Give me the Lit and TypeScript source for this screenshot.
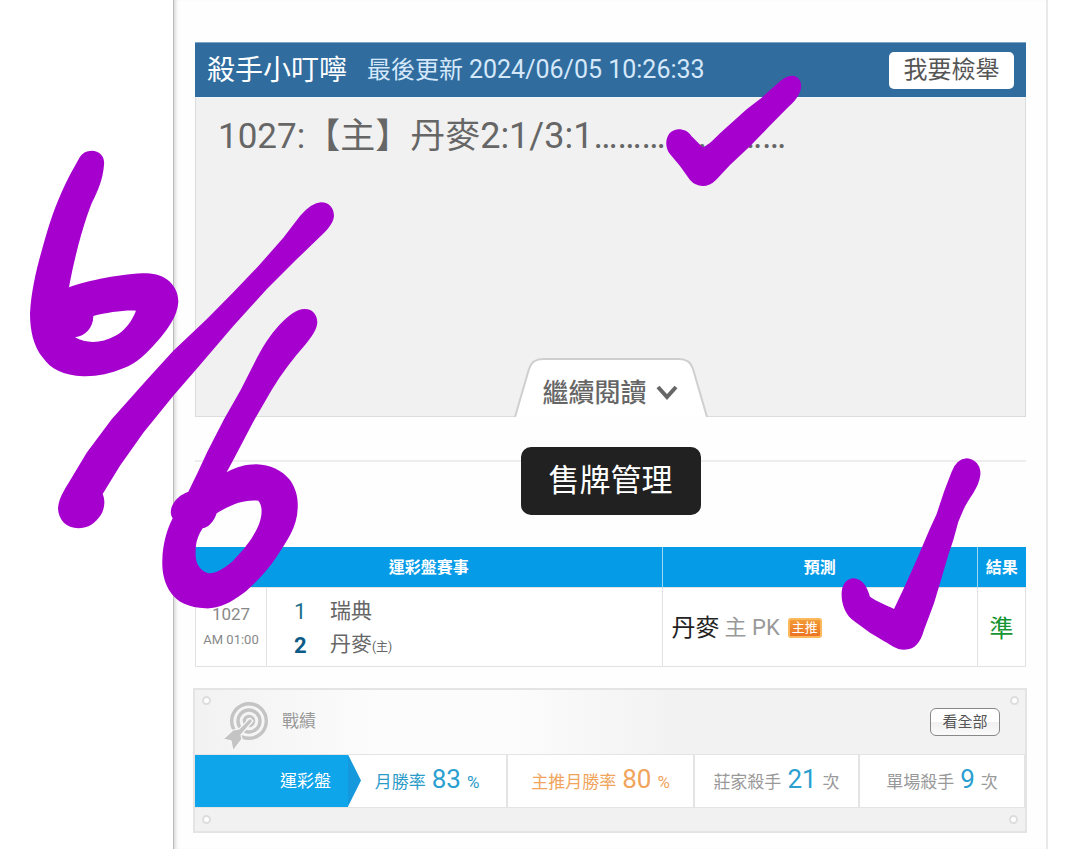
import { LitElement, html, css, svg } from "lit";
import { customElement } from "lit/decorators.js";

const stats = [
  { label: "月勝率", value: "83", unit: "%", tone: "blue" },
  { label: "主推月勝率", value: "80", unit: "%", tone: "orange" },
  { label: "莊家殺手", value: "21", unit: "次", tone: "plain" },
  { label: "單場殺手", value: "9", unit: "次", tone: "plain" },
];

const target = svg`
  <g fill="none" stroke="#c4c4c4" stroke-width="3.4">
    <circle cx="27" cy="19" r="17.3"></circle>
    <circle cx="27" cy="19" r="11"></circle>
    <circle cx="27" cy="19" r="4.6"></circle>
  </g>
  <path d="M28 16l3 3-12 14 1 4-9 12-2-10-8-2 10-9 6-1z" fill="#c4c4c4" stroke="#f8f8f8" stroke-width="1.2"></path>`;

@customElement("ink-marks")
class InkMarks extends LitElement {
  static styles = css`
    :host { position: absolute; inset: 0; pointer-events: none; }
    svg { display: block; width: 1076px; height: 849px; fill: #a600cf; fill-rule: evenodd; }
  `;
  render() {
    return html`<svg viewBox="0 0 1076 849" aria-hidden="true">
      <g transform="translate(0 130) scale(.33333)">
        <path d="M275 62C300 62 315 80 312 105C308 150 295 180 275 220L262 255C240 320 220 400 207 472C260 452 370 430 440 430C495 431 535 465 535 515C533 560 500 600 480 625C440 672 410 700 370 715C330 732 290 740 250 739C190 737 150 715 130 685C100 650 90 600 90 550C95 460 120 380 140 310C160 240 190 170 215 125L240 80Q252 62 275 62ZM280 558C320 548 370 540 408 542C395 575 375 602 345 618C305 640 260 642 225 622C255 618 280 595 280 558Z"></path>
        <path d="M963 217C988 217 1002 235 1002 258C1000 280 982 300 960 320L890 388L800 478L700 588L600 705L520 797L430 908L360 1007L308 1092C318 1115 313 1145 295 1165C280 1185 260 1195 235 1195C200 1195 175 1170 174 1135C176 1100 200 1070 220 1035L260 968L335 868L440 750L520 662L620 568L700 487L780 403L850 323L900 258Q935 218 963 217Z"></path>
        <path d="M915 537C938 537 952 555 952 578C950 600 935 620 915 645C880 685 845 730 815 780L760 875L705 980L680 1027C710 1010 740 1003 770 1003C810 1005 845 1020 870 1050C890 1078 895 1110 893 1135C892 1190 860 1235 830 1280C800 1325 760 1365 730 1390C690 1420 655 1437 615 1435C570 1432 530 1420 507 1380C490 1350 486 1320 487 1290C488 1245 500 1200 518 1165C508 1150 512 1130 525 1113C540 1095 550 1092 565 1085L592 1030L622 965L672 868L722 780L765 695C785 655 810 615 838 585Q885 535 915 537ZM650 1150C690 1125 730 1108 775 1112C790 1130 785 1160 778 1180C765 1215 735 1255 710 1280C690 1305 650 1332 625 1330C595 1320 585 1295 587 1265C587 1235 595 1215 608 1195C625 1193 642 1175 650 1150Z"></path>
      </g>
      <g transform="translate(580 30) scale(.33333)">
        <path d="M637 137C655 138 666 153 663 174C659 198 642 216 622 234L565 292L510 349L450 405L408 450Q390 468 368 468Q345 467 330 450L300 408L268 370C250 345 258 300 295 298C312 298 325 304 334 318L368 352C388 344 402 328 420 310L455 278L500 238L545 203L590 163Q615 137 637 137Z"></path>
      </g>
      <g transform="translate(640 440) scale(.33333)">
        <path d="M980 55C1008 57 1024 80 1021 105C1017 145 985 175 970 210L955 245L940 300L925 345L903 420L882 490L852 570C840 610 825 629 792 629C768 629 755 615 735 605L690 578L645 545C615 525 603 490 605 455C608 430 622 415 642 415C668 418 680 438 690 470C710 485 740 495 762 507L795 437L832 355L868 270L890 222L912 155L935 95Q950 57 980 55Z"></path>
      </g>
    </svg>`;
  }
}

@customElement("app-root")
class AppRoot extends LitElement {
  static styles = css`
    :host {
      display: block; position: relative; min-height: 100vh; overflow: hidden; box-sizing: border-box;
      padding: 0 28px 0 173px; background: #fff; color: #666;
      font-family: Roboto, "Noto Sans CJK TC", sans-serif;
    }
    * { box-sizing: border-box; }
    button { font-family: inherit; margin: 0; padding: 0; cursor: pointer; }
    .page {
      min-height: 100vh; padding: 42px 20px 16px 21px; background: #fefefe;
      border-left: 1px solid #bbb; border-right: 2px solid #e9e9e9;
      box-shadow: inset 4px 0 4px -3px #ccc;
    }
    .bar {
      display: flex; align-items: center; height: 55px; padding: 0 12px; background: #306c9e;
      border-top: 1px solid #7fa6c6; color: #fff;
    }
    .name { margin: 0; font-size: 28px; font-weight: 400; line-height: 40px; padding-top: 2px; }
    .time { margin-left: 20px; font-size: 24px; line-height: 40px; color: #d5e8fa; }
    .time span { font-size: 25px; }
    .report {
      margin-left: auto; width: 125px; height: 37px; border: 0; border-radius: 5px;
      background: #fff; color: #555; font-size: 24px; line-height: 36px;
    }
    .body {
      display: flex; flex-direction: column; justify-content: space-between; height: 320px;
      background: #f1f1f1; border: 1px solid #dcdcdc; border-top-color: #eef6fb;
    }
    .body p { margin: 0; padding: 12px 22px; font-size: 35px; line-height: 52px; color: #666; white-space: nowrap; }
    .body p span { font-size: 36px; }
    .more {
      display: grid; place-items: center; align-self: center; width: 194px; height: 59px; margin-bottom: -1px;
      border: 0; background: none; color: #666; font-size: 26px; font-weight: 500; line-height: 36px;
    }
    .more > * { grid-area: 1 / 1; }
    .more span { display: flex; align-items: center; gap: 8px; padding-top: 10px; }
    .manage {
      display: grid; grid-template-columns: 1fr 180px 1fr; margin: 30px 0 32px; height: 68px;
    }
    .manage::before, .manage::after { content: ""; margin-top: 13px; border-top: 2px solid #ededed; }
    .manage button { border: 0; border-radius: 10px; background: #212121; color: #fff; font-size: 31px; line-height: 44px; }
    table { width: 100%; table-layout: fixed; border-collapse: collapse; }
    th { height: 40px; padding: 3px 0 0; background: #059be7; color: #fff; font-size: 16px; line-height: 24px; border-left: 1px solid #9fd7f7; }
    th:first-child { border-left-color: #059be7; }
    td { height: 79px; padding: 0; border: 1px solid #e2e2e2; background: #fff; }
    .c-time { width: 71px; } .c-pick { width: 38%; } .c-res { width: 48px; }
    .when { text-align: center; color: #888; }
    .when div { font-size: 17px; line-height: 26px; }
    .when small { display: block; font-size: 13px; line-height: 26px; }
    .teams { padding-top: 5px; }
    .team { display: grid; grid-template-columns: 36px 1fr; padding-left: 27px; align-items: center; line-height: 33px; font-size: 21px; }
    .team b { font-size: 22px; color: #1c6f8c; font-weight: 400; }
    .team .home { font-weight: 700; color: #0e5b87; }
    .team small { font-size: 12px; }
    .pick { display: flex; align-items: center; padding: 2px 0 0 9px; color: #222; font-size: 24px; line-height: 36px; }
    .pick i { margin-left: 5px; font-size: 22px; font-style: normal; color: #999; }
    .badge {
      margin-left: 8px; width: 34px; height: 20px; border: 2px solid #fbb85c; border-radius: 3px;
      background: linear-gradient(#f39a35, #ec7424); color: #fff; font-size: 13px; line-height: 16px; text-align: center;
    }
    .ok { text-align: center; color: #169533; font-size: 24px; }
    .record {
      margin: 21px -1px 0 -2px; border: 2px solid #e4e4e4;
      background: linear-gradient(90deg, #f2f2f2 0, #fcfcfc 22%, #fcfcfc 38%, #f2f2f2 58%);
    }
    .top { display: grid; grid-template-columns: 12px 1fr auto; padding: 6px 6px 0 7px; height: 64px; }
    .title { display: flex; gap: 14px; padding: 6px 0 0 8px; font-size: 17px; line-height: 40px; color: #999; }
    .title h2 { margin: 0; font-size: 17px; font-weight: 400; line-height: 38px; }
    .side { display: flex; gap: 10px; }
    .all {
      width: 70px; height: 28px; margin-top: 12px; border: 1px solid #888; border-radius: 6px; color: #555;
      background: linear-gradient(#fff 50%, #f0f0f0 50%, #fafafa); font-size: 15px; line-height: 24px;
    }
    .pin { display: block; width: 9px; height: 9px; border: 2px solid #ddd; border-radius: 50%; background: #fff; }
    .row { display: grid; grid-template-columns: 153fr 160fr 187fr 165fr 165fr; height: 54px; background: #fff; border: solid #e4e4e4; border-width: 1px 0; }
    .kind { position: relative; padding-right: 17px; background: #0fa5ea; color: #fff; font-size: 17px; line-height: 52px; text-align: right; }
    .kind::after {
      content: ""; position: absolute; left: 100%; top: 0; width: 13px; height: 100%;
      background: #1598dc; clip-path: polygon(0 0, 100% 50%, 0 100%);
    }
    .stat { display: flex; align-items: baseline; justify-content: center; gap: 6px; height: 52px; border-right: 2px solid #e4e4e4; font-size: 17px; line-height: 48px; white-space: nowrap; color: #999; }
    .stat:last-child { border-right-width: 1px; }
    .stat strong { font-size: 26px; font-weight: 400; color: #2b9fd0; }
    .blue { color: #2b9cc8; }
    .orange, .orange strong { color: #f0a45c; }
    .foot { display: flex; justify-content: space-between; padding: 7px; background: #f1f1f1; height: 23px; }
  `;

  render() {
    return html`
      <main class="page">
        <header class="bar">
          <h1 class="name">殺手小叮嚀</h1>
          <time class="time">最後更新 <span>2024/06/05 10:26:33</span></time>
          <button class="report">我要檢舉</button>
        </header>
        <section class="body">
          <p>1027:【主】丹麥<span>2:1/3:1${"…".repeat(8)}</span></p>
          <button class="more">
            <svg width="194" height="59" aria-hidden="true">
              <path d="M1 59L15 11Q18 1 29 1H165Q176 1 179 11L193 59" fill="#fff" stroke="#cfcfcf" stroke-width="2"></path>
            </svg>
            <span>繼續閱讀
              <svg width="24" height="18" aria-hidden="true"><path d="M3 3l9 10 9-10" fill="none" stroke="#666" stroke-width="4"></path></svg>
            </span>
          </button>
        </section>
        <div class="manage"><button>售牌管理</button></div>
        <table>
          <colgroup><col class="c-time"><col><col class="c-pick"><col class="c-res"></colgroup>
          <thead>
            <tr><th colspan="2" scope="col">運彩盤賽事</th><th scope="col">預測</th><th scope="col">結果</th></tr>
          </thead>
          <tbody>
            <tr>
              <td class="when"><div>1027</div><small>AM 01:00</small></td>
              <td class="teams">
                <div class="team"><b>1</b><span>瑞典</span></div>
                <div class="team"><b class="home">2</b><span>丹麥<small>(主)</small></span></div>
              </td>
              <td><div class="pick">丹麥<i>主 PK</i><span class="badge">主推</span></div></td>
              <td class="ok">準</td>
            </tr>
          </tbody>
        </table>
        <section class="record">
          <div class="top">
            <span class="pin"></span>
            <div class="title">
              <svg width="46" height="50" aria-hidden="true">${target}</svg>
              <h2>戰績</h2>
            </div>
            <div class="side"><button class="all">看全部</button><span class="pin"></span></div>
          </div>
          <div class="row">
            <div class="kind">運彩盤</div>
            ${stats.map((s) => html`<div class="stat ${s.tone}"><span>${s.label}</span><strong>${s.value}</strong><span>${s.unit}</span></div>`)}
          </div>
          <div class="foot"><span class="pin"></span><span class="pin"></span></div>
        </section>
      </main>
      <ink-marks></ink-marks>
    `;
  }
}
